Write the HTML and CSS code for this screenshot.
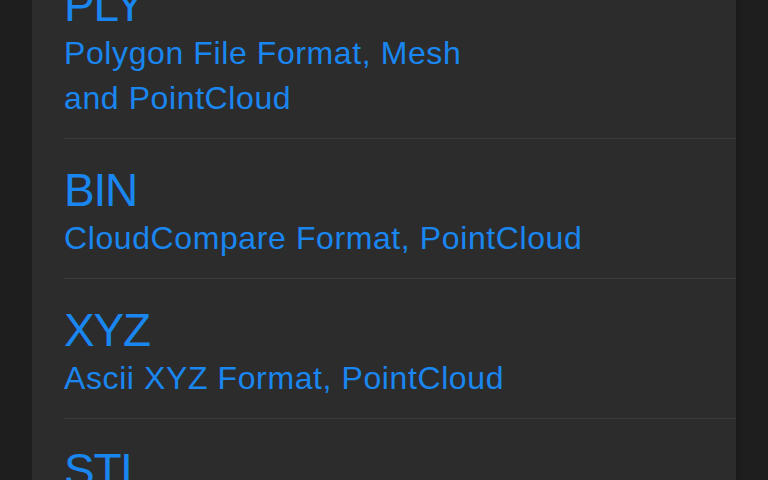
FILE: index.html
```html
<!DOCTYPE html>
<html lang="en">
<head>
    <meta charset="UTF-8">
    <meta name="viewport" content="width=device-width, initial-scale=1.0">
    <title>Export Formats</title>
    <link rel="stylesheet" href="styles.css">
</head>
<body>

    <div class="sheet">
        <ul class="format-list">
            <li class="format">
                <div class="format-name">PLY</div>
                <div class="format-desc">Polygon File Format, Mesh<br>and PointCloud</div>
            </li>
            <li class="format">
                <div class="format-name">BIN</div>
                <div class="format-desc">CloudCompare Format, PointCloud</div>
            </li>
            <li class="format">
                <div class="format-name">XYZ</div>
                <div class="format-desc">Ascii XYZ Format, PointCloud</div>
            </li>
            <li class="format">
                <div class="format-name">STL</div>
                <div class="format-desc">Stereolithography Format, Mesh</div>
            </li>
        </ul>
    </div>

</body>
</html>
```

FILE: styles.css
```css
html, body {
    margin: 0;
    height: 100%;
}
body {
    background-color: #1e1e1e;
    font-family: "Liberation Sans", Arial, sans-serif;
    overflow: hidden;
}
.sheet {
    margin: 0 32px;
    height: 100%;
    background-color: #2c2c2c;
    box-shadow: 4px 0 4px rgba(0, 0, 0, 0.12);
    overflow: hidden;
}
.format-list {
    list-style: none;
    margin: -46px 0 0 0;
    padding: 0 0 0 32px;
}
.format {
    padding: 25px 0 17px 0;
    border-bottom: 1px solid #3a3a3a;
    color: #1a86f0;
}
.format-name {
    font-size: 46px;
    line-height: 52px;
    letter-spacing: -1.2px;
}
.format-desc {
    font-size: 32px;
    line-height: 45px;
    letter-spacing: 0.6px;
}
```
